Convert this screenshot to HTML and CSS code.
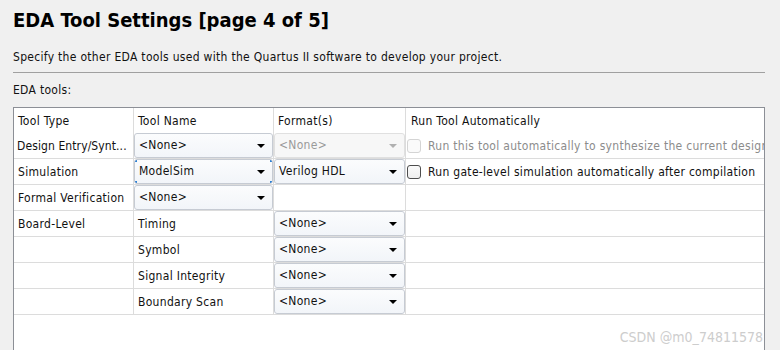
FILE: index.html
```html
<!DOCTYPE html>
<html lang="en">
<head>
    <meta charset="UTF-8">
    <meta name="viewport" content="width=device-width, initial-scale=1.0">
    <link rel="stylesheet" href="styles.css">
    <title>EDA Tool Settings</title>
</head>
<body>
    <div class="page">
        <h1 class="title">EDA Tool Settings [page 4 of 5]</h1>
        <p class="desc">Specify the other EDA tools used with the Quartus II software to develop your project.</p>
        <div class="sep"></div>
        <div class="label">EDA tools:</div>

        <div class="tools-box">
            <table class="tools">
                <tr class="head">
                    <td class="c1">Tool Type</td>
                    <td class="c2">Tool Name</td>
                    <td class="c3">Format(s)</td>
                    <td class="c4">Run Tool Automatically</td>
                </tr>
                <tr>
                    <td class="c1 tight">Design Entry/Synt...</td>
                    <td class="c2 cell-combo"><div class="combo">&lt;None&gt;</div></td>
                    <td class="c3 cell-combo"><div class="combo disabled">&lt;None&gt;</div></td>
                    <td class="c4 cell-check"><label class="check disabled"><span class="box"></span>Run this tool automatically to synthesize the current design</label></td>
                </tr>
                <tr>
                    <td class="c1">Simulation</td>
                    <td class="c2 cell-combo"><div class="combo focus">ModelSim</div></td>
                    <td class="c3 cell-combo"><div class="combo">Verilog HDL</div></td>
                    <td class="c4 cell-check"><label class="check"><span class="box"></span>Run gate-level simulation automatically after compilation</label></td>
                </tr>
                <tr>
                    <td class="c1">Formal Verification</td>
                    <td class="c2 cell-combo"><div class="combo">&lt;None&gt;</div></td>
                    <td class="c3"></td>
                    <td class="c4"></td>
                </tr>
                <tr>
                    <td class="c1">Board-Level</td>
                    <td class="c2">Timing</td>
                    <td class="c3 cell-combo"><div class="combo">&lt;None&gt;</div></td>
                    <td class="c4"></td>
                </tr>
                <tr>
                    <td class="c1"></td>
                    <td class="c2">Symbol</td>
                    <td class="c3 cell-combo"><div class="combo">&lt;None&gt;</div></td>
                    <td class="c4"></td>
                </tr>
                <tr>
                    <td class="c1"></td>
                    <td class="c2">Signal Integrity</td>
                    <td class="c3 cell-combo"><div class="combo">&lt;None&gt;</div></td>
                    <td class="c4"></td>
                </tr>
                <tr>
                    <td class="c1"></td>
                    <td class="c2">Boundary Scan</td>
                    <td class="c3 cell-combo"><div class="combo">&lt;None&gt;</div></td>
                    <td class="c4"></td>
                </tr>
            </table>
            <div class="watermark">CSDN @m0_74811578</div>
        </div>
    </div>
</body>
</html>
```

FILE: styles.css
```css
body {
    font-family: "DejaVu Sans Condensed", "DejaVu Sans", sans-serif;
    font-stretch: condensed;
    font-size: 12px;
    letter-spacing: 0.3px;
    color: #111;
    background-color: #f0f0f0;
    margin: 0;
    padding: 0;
    overflow: hidden;
}

.page {
    width: 752px;
    padding-left: 13px;
}

.title {
    font-size: 20px;
    font-weight: bold;
    line-height: 24px;
    letter-spacing: 0;
    margin: 8px 0 0 0;
    color: #000;
}

.desc {
    margin: 18px 0 0 0;
    line-height: 15px;
}

.sep {
    height: 1px;
    background-color: #a0a0a0;
    margin-top: 7px;
}

.label {
    margin-top: 10px;
    line-height: 15px;
}

.tools-box {
    position: relative;
    margin-top: 9px;
    height: 243px;
    background-color: #fff;
    border: 1px solid #8c8f96;
    border-bottom: none;
    overflow: hidden;
}

.tools {
    border-collapse: separate;
    border-spacing: 0;
    table-layout: fixed;
    width: 750px;
}

.tools td {
    height: 26px;
    padding: 0 0 0 4px;
    border-right: 1px solid #dcdcdc;
    border-bottom: 1px solid #dcdcdc;
    white-space: nowrap;
    overflow: hidden;
    vertical-align: middle;
    box-sizing: border-box;
}

.tools .head td {
    height: 25px;
    border-bottom: none;
}

.tools .c1 {
    width: 120px;
}

.tools .c2 {
    width: 140px;
}

.tools .c3 {
    width: 132px;
}

.tools .c4 {
    padding-left: 5px;
    border-right: none;
}

.tools td.tight {
    padding-left: 3px;
    letter-spacing: 0.1px;
}

.tools td.cell-combo {
    padding: 0;
}

.tools td.cell-check {
    padding-left: 1px;
}

.combo {
    position: relative;
    height: 25px;
    line-height: 23px;
    box-sizing: border-box;
    padding-left: 4px;
    border: 1px solid #c6cbd3;
    border-radius: 3px;
    background: linear-gradient(#fbfcfd, #f2f5f9);
}

.combo::after {
    content: "";
    position: absolute;
    right: 7px;
    top: 10px;
    border-left: 4px solid transparent;
    border-right: 4px solid transparent;
    border-top: 4px solid #000;
}

.combo.disabled {
    color: #9a9a9a;
    border-color: #e0e0e0;
    background: #f7f7f7;
}

.combo.disabled::after {
    border-top-color: #b0b0b0;
}

.combo.focus {
    background:
        linear-gradient(#2a7fd4, #2a7fd4) left top / 2px 2px no-repeat,
        linear-gradient(#2a7fd4, #2a7fd4) left bottom / 2px 2px no-repeat,
        linear-gradient(#2a7fd4, #2a7fd4) right top / 2px 2px no-repeat,
        linear-gradient(#2a7fd4, #2a7fd4) right bottom / 2px 2px no-repeat,
        linear-gradient(#fbfcfd, #f2f5f9);
}

.check {
    display: flex;
    align-items: center;
    gap: 7px;
}

.check .box {
    width: 14px;
    height: 14px;
    box-sizing: border-box;
    border: 1px solid #4d4d4d;
    border-radius: 3px;
    background: linear-gradient(#fafafa, #eeeeee);
    flex: none;
}

.check.disabled {
    color: #8c8c8c;
}

.check.disabled .box {
    border-color: #d4d4d4;
    background: #fafafa;
}

.watermark {
    position: absolute;
    right: 1px;
    bottom: 6px;
    font-size: 14px;
    letter-spacing: 0;
    color: #cdcdcd;
    white-space: nowrap;
}
```
